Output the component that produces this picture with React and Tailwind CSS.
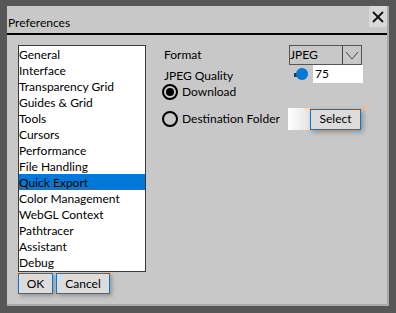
const sections = [
  'General',
  'Interface',
  'Transparency Grid',
  'Guides & Grid',
  'Tools',
  'Cursors',
  'Performance',
  'File Handling',
  'Quick Export',
  'Color Management',
  'WebGL Context',
  'Pathtracer',
  'Assistant',
  'Debug',
];

const App = () => {
  const active = 'Quick Export';

  return (
    <div className="w-[396px] h-[313px] bg-[#575757] pt-[6px] pl-[7px] font-['Lato',sans-serif] text-[12px] text-black">
      <div className="relative w-[382px] h-[300px] bg-[#c8c8c8] border-r-2 border-b-2 border-[#a9a9a9] flex flex-col">
        {/* Title */}
        <div className="h-[29px] border-b-2 border-black flex items-end pb-[2px] pl-[1px] leading-[16px] whitespace-nowrap">
          Preferences
        </div>
        <button className="absolute right-0 top-0 w-[18px] h-[21px] bg-[#d9d9d9] flex items-center justify-center">
          <svg width="12" height="12" viewBox="0 0 12 12">
            <path d="M1 1 L11 11 M11 1 L1 11" stroke="#111" strokeWidth="1.8" />
          </svg>
        </button>

        <div className="flex pl-[11px] pt-[10px]">
          {/* Sections list */}
          <div className="w-[128px]">
            <div className="h-[227px] bg-white border border-[#3a3a3a] overflow-hidden">
              {sections.map((name) => (
                <div
                  key={name}
                  className={`h-[16px] leading-[17px] whitespace-nowrap overflow-hidden ${
                    name === active ? 'bg-[#0078d7]' : ''
                  }`}
                >
                  {name}
                </div>
              ))}
            </div>
            <div className="flex gap-[3px] mt-[1px]">
              <button className="w-[35px] h-[21px] bg-[#dcdcdc] border border-[#0078d7] shadow-[2px_2px_4px_rgba(0,0,0,0.25)] leading-[18px]">
                OK
              </button>
              <button className="w-[54px] h-[21px] bg-[#dcdcdc] border border-[#0078d7] shadow-[2px_2px_4px_rgba(0,0,0,0.25)] leading-[18px]">
                Cancel
              </button>
            </div>
          </div>

          {/* Quick export options */}
          <div className="ml-[17px] flex flex-col whitespace-nowrap">
            <div className="flex items-center h-[20px]">
              <span className="w-[126px] pl-[1px] leading-[16px]">Format</span>
              <div className="w-[73px] h-[20px] border border-[#555] flex items-stretch">
                <span className="flex-1 leading-[18px]">JPEG</span>
                <span className="w-[19px] border-l border-[#444] flex items-center justify-center">
                  <svg width="14" height="9" viewBox="0 0 14 9">
                    <path d="M1 1 L7 8 L13 1" fill="none" stroke="#444" strokeWidth="1" />
                  </svg>
                </span>
              </div>
            </div>
            <div className="flex items-center h-[18px]">
              <span className="w-[131px] pl-[1px] leading-[16px] pt-[3px]">JPEG Quality</span>
              <span className="w-[3px] h-[4px] bg-[#333] mt-[1px]" />
              <span className="w-[12px] h-[12px] rounded-full bg-[#0078d7] -ml-[1px]" />
              <span className="w-[5px]" />
              <input
                readOnly
                value="75"
                className="w-[50px] h-[18px] bg-white pl-[2px] outline-none"
              />
            </div>
            <div className="flex items-center h-[17px] -ml-[1px]">
              <span className="w-[16px] h-[16px] rounded-full border-2 border-black flex items-center justify-center">
                <span className="w-[8px] h-[8px] rounded-full bg-black" />
              </span>
              <span className="ml-[4px] leading-[16px]">Download</span>
            </div>
            <div className="flex items-center h-[22px] mt-[8px] -ml-[1px]">
              <span className="w-[16px] h-[16px] rounded-full border-2 border-black" />
              <span className="ml-[4px] w-[106px] leading-[16px]">Destination Folder</span>
              <span className="w-[22px] h-[22px] bg-gradient-to-r from-white to-[#e4e4e4]" />
              <button className="w-[51px] h-[21px] bg-[#dcdcdc] border border-[#0078d7] shadow-[2px_2px_5px_rgba(0,0,0,0.3)] leading-[18px]">
                Select
              </button>
            </div>
          </div>
        </div>
      </div>
    </div>
  );
};

export default App;
